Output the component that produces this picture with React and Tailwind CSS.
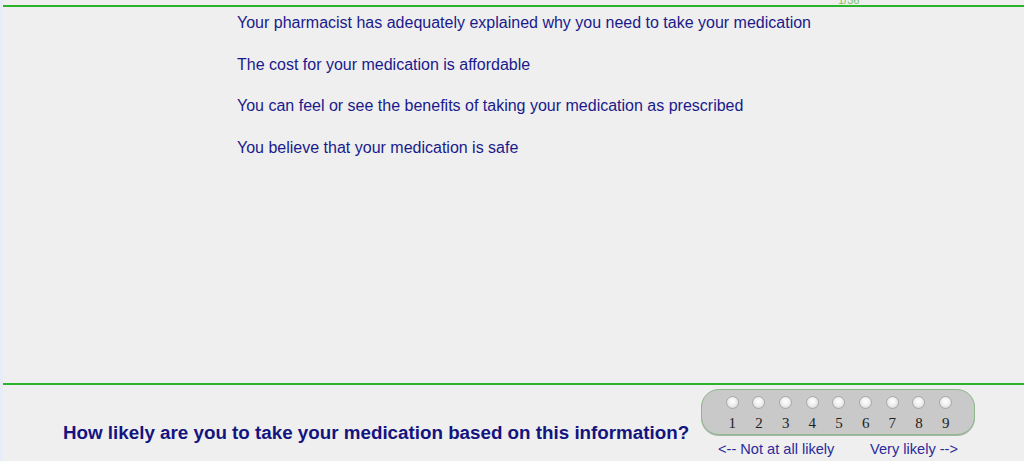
const statements = [
  'Your pharmacist has adequately explained why you need to take your medication',
  'The cost for your medication is affordable',
  'You can feel or see the benefits of taking your medication as prescribed',
  'You believe that your medication is safe',
];

const scale = [1, 2, 3, 4, 5, 6, 7, 8, 9];

function Radio() {
  return (
    <span className="block w-[13px] h-[13px] rounded-full border border-[#a8a8a8] bg-[radial-gradient(circle_at_50%_40%,#ffffff_0%,#f4f4f4_35%,#cfcfcf_100%)]" />
  );
}

export default function App() {
  return (
    <div className="flex w-[1024px] h-[461px] bg-[#efefef] font-['Liberation_Sans',Arial,sans-serif] overflow-hidden">
      <div className="w-[3px] bg-[#e7edf8]" />
      <div className="flex-1 flex flex-col">
        <div className="h-[5px] overflow-hidden flex items-end pl-[835px]">
          <span className="text-[11px] leading-[11px] text-[#78c46a] -mb-[1px]">1/36</span>
        </div>

        <div className="h-[378px] border-t-2 border-[#2bb32b] pt-[6px] pl-[234px]">
          <div className="flex flex-col gap-[21.6px]">
            {statements.map((s) => (
              <p key={s} className="text-[16px] leading-[20px] text-[#1a1a8c]">{s}</p>
            ))}
          </div>
        </div>

        <div className="flex-1 border-t-2 border-[#2bb32b] flex pl-[60px]">
          <div className="w-[638px]">
            <h2 className="mt-[37px] text-[18.8px] leading-[22px] font-bold text-[#14147f] whitespace-nowrap">
              How likely are you to take your medication based on this information?
            </h2>
          </div>
          <div className="mt-[4px] w-[274px]">
            <div className="h-[46px] rounded-[18px] border border-[#8cb98c] bg-[#c9c9c9] shadow-[0_1px_0_#a9b5a9]">
              <div className="grid grid-cols-9 w-[240px] ml-[17px] pt-[6px]">
                {scale.map((n) => (
                  <div key={n} className="flex flex-col items-center">
                    <Radio />
                    <span className="mt-[6px] text-[15px] leading-[16px] text-[#222] font-['Liberation_Serif','Times_New_Roman',serif]">{n}</span>
                  </div>
                ))}
              </div>
            </div>
            <div className="flex justify-between px-[17px] mt-[6px] text-[14.6px] leading-[16px] text-[#2a2a9c] whitespace-nowrap">
              <span>&lt;-- Not at all likely</span>
              <span>Very likely --&gt;</span>
            </div>
          </div>
        </div>
      </div>
    </div>
  );
}
